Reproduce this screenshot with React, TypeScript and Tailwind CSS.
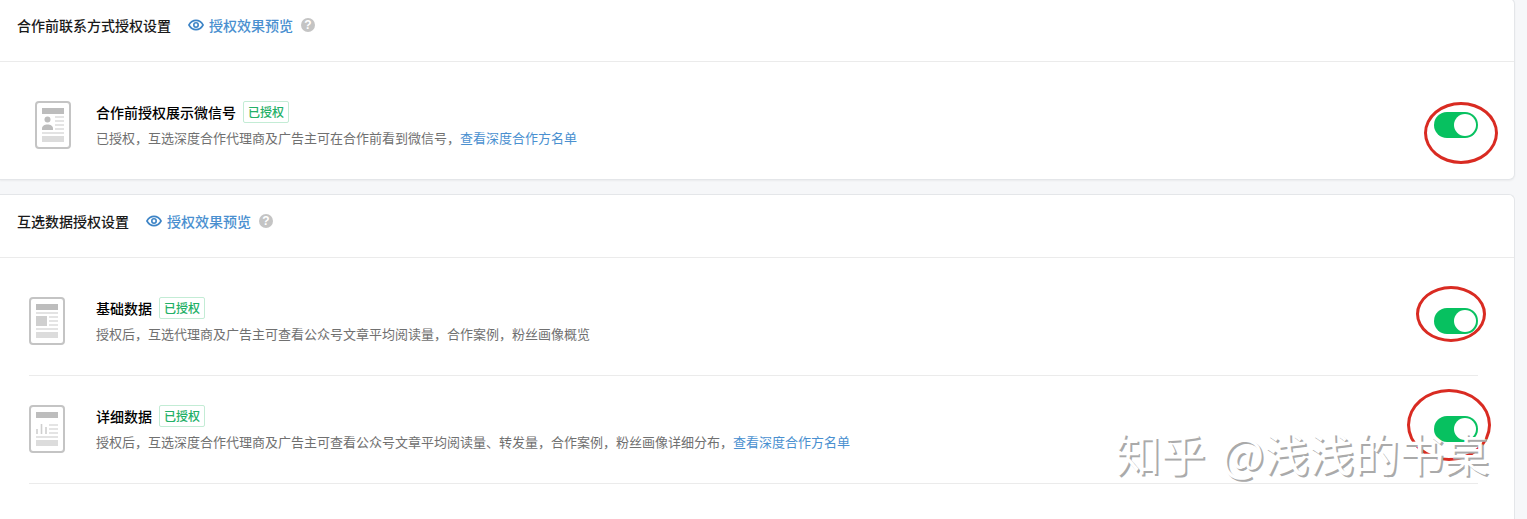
import { useState } from "react";
import type { ReactNode } from "react";

function EyeIcon() {
  return (
    <svg width="16" height="16" viewBox="0 0 16 16" fill="none" stroke="#3d84c6" aria-hidden="true">
      <path d="M0.9 8C2.6 5 5 3.4 8 3.4S13.4 5 15.1 8C13.4 11 11 12.6 8 12.6S2.6 11 0.9 8Z" strokeWidth="1.6" strokeLinejoin="round" />
      <circle cx="8" cy="8" r="2.2" strokeWidth="1.6" />
    </svg>
  );
}

type DocKind = "contact" | "basic" | "detail";

function DocIcon({ kind }: { kind: DocKind }) {
  return (
    <svg width="36" height="48" viewBox="0 0 36 48" aria-hidden="true">
      <rect x="1" y="1" width="34" height="46" rx="3" fill="#fff" stroke="#c4c4c4" strokeWidth="2" />
      <rect x="7" y="7" width="22" height="6" fill="#bdbdbd" />
      {kind === "contact" && (
        <g>
          <circle cx="12.5" cy="18.5" r="3" fill="#bdbdbd" />
          <path d="M7 29V27.5C7 25 9.5 23.5 12.5 23.5S18 25 18 27.5V29Z" fill="#bdbdbd" />
          <path d="M20 16H29M20 20H29M20 24H29M20 28H29" stroke="#dcdcdc" strokeWidth="1.4" />
        </g>
      )}
      {kind === "basic" && (
        <g>
          <path d="M7 16H29" stroke="#dcdcdc" strokeWidth="1.6" />
          <rect x="7" y="19" width="11" height="10" fill="#cfcfcf" />
          <path d="M20 20H29M20 24H29M20 28H29" stroke="#dcdcdc" strokeWidth="1.6" />
        </g>
      )}
      {kind === "detail" && (
        <g>
          <path d="M8 29V24M12.5 29V19M17 29V22" stroke="#cfcfcf" strokeWidth="1.6" />
          <path d="M20 20H29M20 24H29M20 28H29" stroke="#dcdcdc" strokeWidth="1.6" />
        </g>
      )}
      <path d="M7 32H29" stroke="#dcdcdc" strokeWidth="1.6" />
      <rect x="7" y="35" width="22" height="6" fill="#dcdcdc" />
    </svg>
  );
}

function CardHeader({ title }: { title: string }) {
  return (
    <header className="flex items-center border-b border-[#ebebeb] pt-[15px] pr-4 pb-[25px] pl-[17px] text-sm leading-[22px]">
      <h2 className="font-medium text-[#1a1a1a]">{title}</h2>
      <a href="#preview" className="ml-[17px] flex items-center gap-[5px] font-medium text-[#4a90d0]">
        <EyeIcon />
        授权效果预览
      </a>
      <button
        type="button"
        aria-label="帮助"
        className="ml-2 flex size-3.5 items-center justify-center rounded-full bg-[#c4c4c4] font-['Liberation_Sans',sans-serif] text-xs leading-3 font-bold text-white"
      >
        ?
      </button>
    </header>
  );
}

type RowProps = {
  id: string;
  kind: DocKind;
  title: string;
  desc: string;
  link?: string;
  iconClass?: string;
  rowClass?: string;
  mark: ReactNode;
};

function AuthRow({ id, kind, title, desc, link, iconClass = "", rowClass = "", mark }: RowProps) {
  const [on, setOn] = useState(true);

  return (
    <li className={`mr-9 ml-[29px] flex items-center pt-[29px] pb-[30px] ${rowClass}`}>
      <div className={`w-[67px] shrink-0 ${iconClass}`}>
        <DocIcon kind={kind} />
      </div>
      <div className="min-w-0 flex-1 pb-px">
        <div className="flex items-center gap-[7px]">
          <label htmlFor={id} className="text-sm leading-[22px] font-medium text-black">
            {title}
          </label>
          <span className="rounded-xs border border-[#c3ecd5] px-1 text-xs leading-5 font-medium text-[#23b067]">已授权</span>
        </div>
        <p className="mt-[5px] text-[13px] leading-5 text-[#707070]">
          {desc}
          {link && (
            <a href="#partners" className="text-[#4a90d0]">
              {link}
            </a>
          )}
        </p>
      </div>
      <div className="relative flex shrink-0">
        <input
          id={id}
          type="checkbox"
          checked={on}
          onChange={(e) => setOn(e.target.checked)}
          className="h-[26px] w-11 cursor-pointer appearance-none rounded-full bg-[#d9d9d9] p-0.5 before:block before:size-[22px] before:rounded-full before:bg-white checked:bg-[#07c160] checked:before:ml-[18px]"
        />
        {mark}
      </div>
    </li>
  );
}

export default function App() {
  return (
    <main className="relative flex min-h-screen flex-col gap-3.5 overflow-hidden bg-[#f6f7f9] pr-3 font-['Noto_Sans_CJK_SC',sans-serif]">
      <section className="-mt-0.5 rounded-r-md border border-l-0 border-[#e4e6e9] bg-white shadow-xs">
        <CardHeader title="合作前联系方式授权设置" />
        <ul className="pt-2.5">
          <AuthRow
            id="wechat"
            kind="contact"
            title="合作前授权展示微信号"
            desc="已授权，互选深度合作代理商及广告主可在合作前看到微信号，"
            link="查看深度合作方名单"
            iconClass="pl-1.5"
            mark={
              <span className="pointer-events-none absolute -top-2.5 -left-2.5 h-[62px] w-[74px] rounded-[50%] border-3 border-[#d92b22]" />
            }
          />
        </ul>
      </section>

      <section className="flex-1 rounded-tr-md border-t border-r border-[#e4e6e9] bg-white">
        <CardHeader title="互选数据授权设置" />
        <ul className="pt-2.5">
          <AuthRow
            id="basic"
            kind="basic"
            title="基础数据"
            desc="授权后，互选代理商及广告主可查看公众号文章平均阅读量，合作案例，粉丝画像概览"
            rowClass="border-b border-[#ebebeb]"
            mark={
              <span className="pointer-events-none absolute -top-[22px] -left-[18px] h-14 w-[70px] rounded-[50%] border-3 border-[#d92b22]" />
            }
          />
          <AuthRow
            id="detail"
            kind="detail"
            title="详细数据"
            desc="授权后，互选深度合作代理商及广告主可查看公众号文章平均阅读量、转发量，合作案例，粉丝画像详细分布，"
            link="查看深度合作方名单"
            rowClass="border-b border-[#ebebeb]"
            mark={
              <span className="pointer-events-none absolute -top-[27px] -left-[27px] h-[72px] w-[84px] rounded-[50%] border-3 border-[#d92b22]" />
            }
          />
        </ul>
      </section>

      <div className="pointer-events-none absolute right-[38px] bottom-9 flex gap-4 text-[45px] leading-[60px] whitespace-nowrap text-white [text-shadow:2px_2px_0_#aaa]">
        <span>知乎</span>
        <span>@浅浅的书桌</span>
      </div>
    </main>
  );
}
